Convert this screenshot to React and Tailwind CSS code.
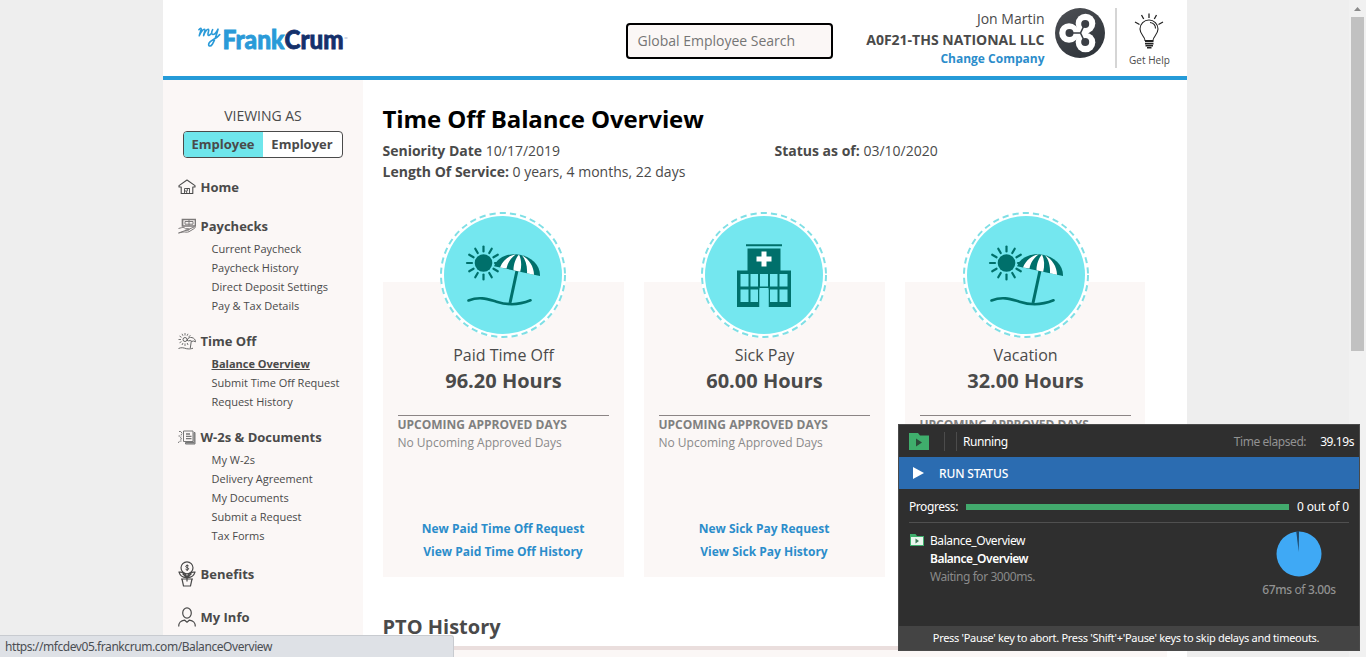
import React from "react";

const INK = "#4a4a4a";

function HomeIcon() {
  return (
    <svg width="18" height="16" viewBox="0 0 18 16" fill="none" stroke={INK} strokeWidth="1.1">
      <path d="M1 8V6.600L9 1l8 5.600V8h-2.200v6.500H3.200V8z" strokeLinejoin="round" />
      <path d="M6.500 14.500V9.500h5v5M6.500 12h2.200v2.500M11.500 9.500H9.300V12" strokeWidth="0.900" />
    </svg>
  );
}

function PaycheckIcon() {
  return (
    <svg width="18" height="16" viewBox="0 0 18 16" fill="none" stroke="#7d7a7a" strokeWidth="1">
      <path d="M4.500 1.500h13v6.500h-13z" strokeWidth="1.700" />
      <path d="M7 3.500h8v2.700H7zM11 2v5.500" />
      <path d="M.5 10.500l3-.8c2-.6 3 0 4 1h3c1 0 1 1.500 0 1.500H7.500M11 11.200l5-2.200c1.200-.3 1.500.8.500 1.400l-5.500 3.300c-2 1-4 0-6 .3L.5 15z" />
    </svg>
  );
}

function BeachIcon() {
  return (
    <svg width="18" height="18" viewBox="0 0 18 18" fill="none" stroke="#666" strokeWidth="1">
      <circle cx="7" cy="7.500" r="2" />
      <g stroke="#777">
        <path d="M7 1v2.500M4 1.800l1 2M1.500 4l2 1.300M.5 7.500H3M1.500 10.800l2-1.200M4 13l1-2M7 11.500V14M10 1.800l-1 2M12.500 3.500l-2 1.300M10 13l-.8-2" />
      </g>
      <path d="M9 8.300c1-2.700 3-3.200 5-2.700s3.500 2 3.500 4.200l-2-.8-1.600.4-1.600-1-1.600.5zM13.300 9l-1 7" />
      <path d="M.5 16.500c3-1.500 5.500-.5 8 .2 2.500.4 4 .3 6.500-.5" />
    </svg>
  );
}

function DocsIcon() {
  return (
    <svg width="18" height="15" viewBox="0 0 18 15" fill="none" stroke="#777" strokeWidth="1">
      <path d="M5.500 1h9.500v10.500H5.500z" />
      <path d="M16 2.500h1v11.500H7.500v-1.500H16z" fill="#aaa" />
      <path d="M8 4h4M8 6.300h5.500M8 8.600h5.500" strokeWidth="1.300" />
      <path d="M1 1.500h2l1 2-1 1.500M.5 6h3M2 7.500l2 1-2 1.500M.5 13c0-1.500 1-2 3-2" strokeDasharray="1.800 .6" />
    </svg>
  );
}

function BenefitsIcon() {
  return (
    <svg width="18" height="26" viewBox="0 0 18 26" fill="none" stroke={INK} strokeWidth="1.200">
      <circle cx="9" cy="6.800" r="6" />
      <path d="M10.700 5c-.5-.9-3-.9-3 .4 0 1.500 3 .8 3 2.400 0 1.300-2.700 1.300-3.200.3M9.200 3.500v6.500" strokeWidth="1" />
      <path d="M9 16.500c-4 .3-6.800-1.300-8-5.300 3-.3 6.500.6 8 5.300zM9 16.500c4 .3 6.800-1.300 8-5.300-3-.3-6.500.6-8 5.300zM4.500 12.500L9 17l4.500-4.500" />
      <path d="M3 18h12M4 18l1.500 7h7L14 18M9 16v4.500" />
    </svg>
  );
}

function PersonIcon() {
  return (
    <svg width="18" height="20" viewBox="0 0 18 20" fill="none" stroke={INK} strokeWidth="1.200">
      <ellipse cx="9" cy="6" rx="4.300" ry="5.200" />
      <path d="M.7 19.500c0-4 1.500-5.500 6-6.300L9 15.300l2.300-2.100c4.500.8 6 2.300 6 6.300" />
    </svg>
  );
}

const nav = [
  { label: "Paychecks", Icon: PaycheckIcon, items: ["Current Paycheck", "Paycheck History", "Direct Deposit Settings", "Pay & Tax Details"] },
  { label: "Time Off", Icon: BeachIcon, items: ["Balance Overview", "Submit Time Off Request", "Request History"] },
  { label: "W-2s & Documents", Icon: DocsIcon, items: ["My W-2s", "Delivery Agreement", "My Documents", "Submit a Request", "Tax Forms"] },
];

function NavHeading({ label, Icon }) {
  return (
    <div className="flex h-5 items-center">
      <span className="flex h-5 w-[18px] items-center justify-center overflow-visible">
        <span className="shrink-0"><Icon /></span>
      </span>
      <span className="ml-[4.5px] text-[13px] leading-5 font-bold whitespace-nowrap">{label}</span>
    </div>
  );
}

function Sidebar() {
  return (
    <aside className="w-[200px] shrink-0 bg-[#fbf7f6] text-[#4a4a4a]">
      <div className="pt-[26px] text-center text-[14px] leading-5 tracking-[-0.02px]">VIEWING AS</div>
      <div className="mx-5 mt-[5px] flex h-[27px] overflow-hidden rounded-[4px] border border-[#4a4a4a] bg-white text-[13px] font-bold">
        <div className="flex w-[79px] items-center justify-center bg-[#6fe6ec] pr-px">Employee</div>
        <div className="flex flex-1 items-center justify-center pr-px">Employer</div>
      </div>
      <nav className="pt-[19px] pl-[15px]">
        <NavHeading label="Home" Icon={HomeIcon} />
        <div className="h-[19px]" />
        {nav.map(({ label, Icon, items }) => (
          <div key={label}>
            <NavHeading label={label} Icon={Icon} />
            <ul className="pt-[3px] pb-4 pl-[33.5px]">
              {items.map((item) => (
                <li key={item} className={item === "Balance Overview" ? "h-[19px] text-[11px] leading-[19px] font-bold whitespace-nowrap underline" : "h-[19px] text-[11px] leading-[19px] whitespace-nowrap"}>{item}</li>
              ))}
            </ul>
          </div>
        ))}
        <div className="pt-[3px]"><NavHeading label="Benefits" Icon={BenefitsIcon} /></div>
        <div className="pt-[23px]"><NavHeading label="My Info" Icon={PersonIcon} /></div>
      </nav>
    </aside>
  );
}

function Logo() {
  return (
    <svg width="156" height="34" viewBox="0 0 156 34" className="mt-[22px] ml-[32px]">
      <g fill="none" stroke="#2a9ad8" strokeWidth="1.500" strokeLinecap="round" strokeLinejoin="round" transform="translate(-0.500 -1.500) scale(1.100 1.080)">
        <path d="M4 8.500c1.500-1.700 2.200-1.500 2 0L4.300 14c1.500-4 4-6.500 5-5.800.8.700-.8 3.800-1 5.800 1.200-4 3.500-6.500 4.500-5.700.8.800-1.200 4.200-.5 5.200.5.700 1.500.2 2.300-1" />
        <path d="M16.500 8.500c-1.200 2.300-1.300 4.500.2 4.500 2 0 3.500-2.500 4.700-5-1 4-3 10.500-5.200 14-1.800 2.800-4.200 1.700-3-1 1.300-2.700 7-4 9.800-8" />
      </g>
      <text x="27.500" y="26.800" fontFamily="Lato, sans-serif" fontWeight="900" fontSize="26" fill="#2a9ad8" stroke="#2a9ad8" strokeWidth="0.800" textLength="62" lengthAdjust="spacingAndGlyphs">Frank</text>
      <text x="89.500" y="26.800" fontFamily="Lato, sans-serif" fontWeight="900" fontSize="26" fill="#14306b" stroke="#14306b" strokeWidth="0.800" textLength="59" lengthAdjust="spacingAndGlyphs">Crum</text>
      <path d="M149.500 16h3" stroke="#8b9cc0" strokeWidth="0.800" />
    </svg>
  );
}

function CompanyMark() {
  return (
    <svg width="50" height="50" viewBox="0 0 50 50">
      <defs>
        <linearGradient id="mark" x1="0" y1="0" x2="0.600" y2="1">
          <stop offset="0" stopColor="#4e5055" />
          <stop offset="1" stopColor="#30353b" />
        </linearGradient>
      </defs>
      <circle cx="25" cy="25" r="25" fill="url(#mark)" />
      <g fill="#fff">
        <circle cx="14" cy="25" r="9.800" />
        <circle cx="30.500" cy="15.500" r="9.800" />
        <circle cx="30.500" cy="34.500" r="9.800" />
        <circle cx="26" cy="25" r="7" />
      </g>
      <path d="M14 25h11.500L30 15.500M25.500 25L30 34.500" fill="none" stroke="#3b3f45" strokeWidth="1.600" />
      <g fill="#3b3f45">
        <circle cx="14.500" cy="25" r="4" />
        <circle cx="30.200" cy="16" r="4" />
        <circle cx="30.200" cy="34" r="4" />
      </g>
    </svg>
  );
}

function Bulb() {
  return (
    <svg width="30" height="36" viewBox="0 0 30 36" fill="none" stroke="#222" strokeWidth="1.100">
      <path d="M15 .5V5M7.500 2l2.200 4M22.500 2l-2.200 4M1 9l4.500 2.500M29 9l-4.500 2.500" strokeWidth="1.300" />
      <path d="M11 27.500c0-4-5-6-5-11.500a9 9 0 0 1 18 0c0 5.500-5 7.500-5 11.500z" />
      <path d="M16 9.500c3.500.5 5.500 3 5.500 6" />
      <path d="M11 28.500h8.500M11 30.700h8.500M11.500 32.800h7.500M13 34.700h4.500" strokeWidth="1.500" />
    </svg>
  );
}

function Header() {
  return (
    <header className="flex h-20 border-b-4 border-[#259bd8] bg-white text-[#4a4a4a]">
      <div className="w-[463px]"><Logo /></div>
      <div className="mt-[23px] flex h-9 w-[207px] items-center rounded-[4px] border-2 border-black bg-[#fbf7f6] pb-0.5 pl-[9.5px] text-[14px] text-[#757575]">Global Employee Search</div>
      <div className="mt-[9px] w-[211.5px] text-right whitespace-nowrap">
        <div className="text-[14px] leading-5">Jon Martin</div>
        <div className="text-[14px] leading-[22px] font-bold">A0F21-THS NATIONAL LLC</div>
        <div className="text-[12px] leading-4 font-bold text-[#2b8dcb]">Change Company</div>
      </div>
      <div className="mt-2 ml-[10.5px] w-[50px]"><CompanyMark /></div>
      <div className="mt-2 ml-[10px] h-[60px] w-0.5 bg-[#d5d5d5]" />
      <div className="mt-[13px] ml-[7px] flex w-[50px] flex-col items-center">
        <Bulb />
        <span className="mt-[3px] ml-px text-[10px] leading-4 tracking-[0.05px] whitespace-nowrap">Get Help</span>
      </div>
    </header>
  );
}

const RAYS = [0, 30, 60, 90, 120, 150, 180, 210, 240, 270, 300, 330];

function Badge({ kind }) {
  return (
    <svg width="126" height="126" viewBox="0 0 126 126" className="-mt-[70px] shrink-0">
      <circle cx="63" cy="63" r="63" fill="#fff" />
      <circle cx="63" cy="63" r="62" fill="none" stroke="#7fdfe5" strokeWidth="2" strokeDasharray="6.200 4.100" />
      <circle cx="63" cy="63" r="59" fill="#74e7ef" />
      {kind === "beach" ? (
        <g>
          <circle cx="43.500" cy="51" r="8.800" fill="#00706b" />
          <g stroke="#00706b" strokeWidth="2.200" strokeLinecap="round">
            {RAYS.map((a) => (
              <path key={a} d="M43.500 39.500v-5" transform={`rotate(${a} 43.500 51)`} />
            ))}
          </g>
          <path d="M77 58.500L70 91" stroke="#00706b" strokeWidth="3" />
          <path d="M28.500 88.500c12-4.500 20-1 28 1.200 11 3.600 21 4 34-1.400" fill="none" stroke="#00706b" strokeWidth="2.600" strokeLinecap="round" />
          <path d="M54 54.200C57 46 67 41 78 42.500c14 2 22.500 11 22 21.500z" fill="#00706b" />
          <path d="M60 55.500C63 48 69 43.500 76 42.300 70 46.500 67.500 51.500 66.500 56.500zM73.500 58.200c0-5.500 2-12 5.500-15.700 2.500 5 2.800 11.500 1.200 17.300zM82 43.300c7 4 12 11.500 12 19.500l-7-1.500C87.500 54 85.500 47.500 82 43.300z" fill="#fff" />
        </g>
      ) : (
        <g>
          <path d="M45 32.200h36v2H45zM46.500 36.500h33V58.500H90V95H67.500V76h-9V95H36V58.500h10.500z" fill="#00706b" />
          <path d="M60.500 39.500h5v5h5v5h-5v5h-5v-5h-5v-5h5z" fill="#fff" />
          <path d="M39.500 62h8v12.500h-8zM49.500 62H57v12.500h-7.500zM59 62h8v12.500h-8zM69 62h7.500v12.500H69zM78.500 62h8v12.500h-8zM39.500 77.500h8V90h-8zM49.500 77.500H57V90h-7.500zM69 77.500h7.500V90H69zM78.500 77.500h8V90h-8zM58.500 77.500h9V95h-9z" fill="#74e7ef" />
        </g>
      )}
    </svg>
  );
}

const cards = [
  { title: "Paid Time Off", hours: "96.20 Hours", kind: "beach", details: true },
  { title: "Sick Pay", hours: "60.00 Hours", kind: "hospital", details: true },
  { title: "Vacation", hours: "32.00 Hours", kind: "beach", details: false },
];

function Card({ title, hours, kind, details }) {
  return (
    <section className={details ? "flex h-[295px] w-[241px] flex-col items-center bg-[#fbf7f6] px-[15px]" : "flex h-[295px] w-[240px] flex-col items-center bg-[#fbf7f6] pr-[14px] pl-[15px]"}>
      <div className={details ? "mr-px h-14" : "h-14"}><Badge kind={kind} /></div>
      <div className="mt-[5px] text-[16px] leading-6 tracking-[0.01px]">{title}</div>
      <div className="text-[20px] leading-7 font-bold">{hours}</div>
      <div className="mt-5 w-full border-t border-[#8b8585] text-[12px] leading-[18px] whitespace-nowrap text-[#8a8a8a]">
        <div className="-ml-[0.5px] font-bold text-[#808080]">UPCOMING APPROVED DAYS</div>
        {details && <div className="-ml-[0.5px]">No Upcoming Approved Days</div>}
      </div>
      {details && (
        <div className="mt-[65px] mr-px text-center text-[12px] leading-[23px] font-bold whitespace-nowrap text-[#2b8dcb]">
          <div>New {title} Request</div>
          <div>View {title} History</div>
        </div>
      )}
    </section>
  );
}

function Content() {
  return (
    <main className="flex-1 bg-white pt-6 pl-5 text-[14px] text-[#4a4a4a]">
      <h1 className="-ml-[0.5px] w-fit text-[24px] leading-[30px] font-bold tracking-[-0.1px] whitespace-nowrap text-black">Time Off Balance Overview</h1>
      <div className="mt-1.5 -ml-[0.5px] flex leading-[21px] whitespace-nowrap">
        <div className="w-[392px]">
          <div><b>Seniority Date</b> 10/17/2019</div>
          <div><b>Length Of Service:</b> 0 years, 4 months, 22 days</div>
        </div>
        <div><b>Status as of:</b> 03/10/2020</div>
      </div>
      <div className="mt-[100px] flex gap-5">
        {cards.map((c) => <Card key={c.title} {...c} />)}
      </div>
      <h2 className="mt-[35px] -ml-[0.5px] text-[20px] leading-[30px] font-bold">PTO History</h2>
      <div className="mt-1 mr-5 h-[30px] border-t-4 border-[#eadedd] bg-[#fbf7f6]" />
    </main>
  );
}

function Folder({ small }) {
  return small ? (
    <svg width="14" height="12" viewBox="0 0 14 12">
      <path d="M0 0h5.500l1.500 2h7v10H0z" fill="#3fae6c" />
      <path d="M1 3h12v8H1z" fill="#e9f7ee" />
      <path d="M5.500 4.500L9 7 5.500 9.500z" fill="#3d7a57" />
    </svg>
  ) : (
    <svg width="20" height="17" viewBox="0 0 20 17">
      <path d="M0 0h9l2 2.500h9V17H0z" fill="#3fae6c" />
      <path d="M7 5.500l6 4-6 4z" fill="#2c4a39" />
    </svg>
  );
}

function RunPanel() {
  return (
    <div className="absolute top-[424px] left-[898px] flex h-[227px] w-[462px] flex-col border border-[#4a4a4a] bg-[#2f2f2f] text-[12px] tracking-[-0.43px] whitespace-nowrap text-white [font-family:'Noto_Sans','Open_Sans',sans-serif]">
      <div className="flex h-8 shrink-0 items-center pl-[10px]">
        <Folder />
        <div className="ml-[15px] h-[19px] w-px bg-[#4c4c4c]" />
        <div className="ml-[11px] h-[19px] w-px bg-[#4c4c4c]" />
        <span className="ml-[6px] flex-1 pt-0.5">Running</span>
        <span className="mr-[14px] pt-0.5 text-[#929292]">Time elapsed:</span>
        <span className="mr-[5px] pt-0.5">39.19s</span>
      </div>
      <div className="flex h-8 shrink-0 items-center bg-[#2b6cb1] pl-[14px]">
        <svg width="11" height="12" viewBox="0 0 11 12"><path d="M0 0l11 6-11 6z" fill="#fff" /></svg>
        <span className="ml-[15px] pt-0.5 font-medium tracking-[-0.15px]">RUN STATUS</span>
      </div>
      <div className="mx-[10px] flex h-[34px] shrink-0 items-center border-b border-[#505050]">
        <span className="pt-0.5">Progress:</span>
        <div className="mx-2 mt-0.5 h-1.5 flex-1 bg-[#42aa6d]" />
        <span className="pt-0.5 tracking-[-0.15px]">0 out of 0</span>
      </div>
      <div className="flex flex-1 pt-[9px] pl-[11px]">
        <div className="pt-[2px]"><Folder small /></div>
        <div className="ml-[6px] flex-1 leading-[18px]">
          <div>Balance_Overview</div>
          <div className="font-semibold tracking-[-0.5px]">Balance_Overview</div>
          <div className="text-[#8a8a8a]">Waiting for 3000ms.</div>
        </div>
        <div className="flex w-[120px] flex-col items-center text-[#929292]">
          <svg width="46" height="46" viewBox="0 0 46 46" className="-mt-px">
            <circle cx="23" cy="23" r="22.500" fill="#3fa9f5" />
            <path d="M22.700 21L20.200 0h2.800z" fill="#1e4668" />
          </svg>
          <span className="mt-1 leading-[18px] tracking-[-0.35px]"><span className="font-medium">67ms</span> of <span className="font-medium">3.00s</span></span>
        </div>
      </div>
      <div className="flex h-6 shrink-0 items-center justify-center bg-[#444] pr-[6px] text-[11px] tracking-[-0.3px]">Press 'Pause' key to abort. Press 'Shift'+'Pause' keys to skip delays and timeouts.</div>
    </div>
  );
}

export default function App() {
  return (
    <div className="relative flex h-[657px] w-[1366px] overflow-hidden bg-[#eeeeee] [font-family:'Open_Sans',sans-serif]">
      <div className="ml-[163px] flex w-[1024px] shrink-0 flex-col">
        <Header />
        <div className="flex h-[577px] overflow-hidden">
          <Sidebar />
          <Content />
        </div>
      </div>
      <div className="ml-auto flex w-[17px] flex-col items-center bg-[#f1f1f1]">
        <svg width="7" height="17" viewBox="0 0 7 17"><path d="M0 11l3.500-4 3.500 4z" fill="#8a8a8a" /></svg>
        <div className="h-[334px] w-[13px] bg-[#c1c1c1]" />
      </div>
      <RunPanel />
      <div className="absolute top-[635px] left-0 flex h-[22px] w-[454px] items-center rounded-tr-[3px] border-t border-r border-[#c8cbd0] bg-[#dee1e6] pl-[5px] text-[12px] tracking-[-0.43px] whitespace-nowrap text-[#4b4e53] [font-family:'Noto_Sans',sans-serif]">https://mfcdev05.frankcrum.com/BalanceOverview</div>
    </div>
  );
}
